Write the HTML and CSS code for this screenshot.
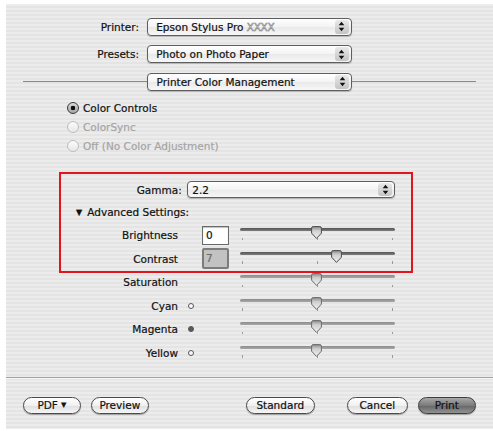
FILE: index.html
```html
<!DOCTYPE html>
<html>
<head>
<meta charset="utf-8">
<title>Print</title>
<link rel="stylesheet" href="styles.css">
</head>
<body>
<div class="panel">
  <div class="field-row">
    <span class="row-label">Printer:</span>
    <div class="popup top-popup">
      <span class="popup-text">Epson Stylus Pro <span class="xxxx">XXXX</span></span>
      <span class="popup-arrows"><svg width="7" height="11" viewBox="0 0 7 11"><path d="M3.5 0.8 L6.3 4.3 H0.7 Z M0.7 6.7 H6.3 L3.5 10.2 Z" fill="#111"/></svg></span>
    </div>
  </div>
  <div class="field-row">
    <span class="row-label">Presets:</span>
    <div class="popup top-popup">
      <span class="popup-text">Photo on Photo Paper</span>
      <span class="popup-arrows"><svg width="7" height="11" viewBox="0 0 7 11"><path d="M3.5 0.8 L6.3 4.3 H0.7 Z M0.7 6.7 H6.3 L3.5 10.2 Z" fill="#111"/></svg></span>
    </div>
  </div>
  <div class="field-row sep-row">
    <span class="sep-line"></span>
    <div class="popup top-popup">
      <span class="popup-text">Printer Color Management</span>
      <span class="popup-arrows"><svg width="7" height="11" viewBox="0 0 7 11"><path d="M3.5 0.8 L6.3 4.3 H0.7 Z M0.7 6.7 H6.3 L3.5 10.2 Z" fill="#111"/></svg></span>
    </div>
    <span class="sep-line"></span>
  </div>

  <div class="radios">
    <div class="radio-row"><span class="radio on"></span><span>Color Controls</span></div>
    <div class="radio-row disabled"><span class="radio"></span><span>ColorSync</span></div>
    <div class="radio-row disabled"><span class="radio"></span><span>Off (No Color Adjustment)</span></div>
  </div>

  <div class="gamma-row">
    <span class="gamma-label">Gamma:</span>
    <div class="popup gamma-popup">
      <span class="popup-text">2.2</span>
      <span class="popup-arrows"><svg width="7" height="11" viewBox="0 0 7 11"><path d="M3.5 0.8 L6.3 4.3 H0.7 Z M0.7 6.7 H6.3 L3.5 10.2 Z" fill="#111"/></svg></span>
    </div>
  </div>
  <div class="advanced-row">
    <span class="disclosure">▼</span><span>Advanced Settings:</span>
  </div>

  <div class="slider-row">
    <span class="slider-label">Brightness</span>
    <span class="indicator"></span>
    <span class="value-box">0</span>
    <div class="slider dark">
      <div class="track"></div>
      <div class="ticks"><i></i><i></i><i></i></div>
      <svg class="thumb" style="left:71.2px" width="11" height="13" viewBox="0 0 11 13"><path d="M2.2 0.6 H8.8 Q10.4 0.6 10.4 2.2 V7.2 L5.5 12.4 L0.6 7.2 V2.2 Q0.6 0.6 2.2 0.6 Z" fill="url(#tg)" stroke="#4a4a4a" stroke-width="1"/><defs><linearGradient id="tg" x1="0" y1="0" x2="0" y2="1"><stop offset="0" stop-color="#8a8a8a"/><stop offset="0.35" stop-color="#cfcfcf"/><stop offset="1" stop-color="#f2f2f2"/></linearGradient></defs></svg>
    </div>
  </div>
  <div class="slider-row">
    <span class="slider-label">Contrast</span>
    <span class="indicator"></span>
    <span class="value-box focused">7</span>
    <div class="slider dark">
      <div class="track"></div>
      <div class="ticks"><i></i><i></i><i></i></div>
      <svg class="thumb" style="left:91.2px" width="11" height="13" viewBox="0 0 11 13"><path d="M2.2 0.6 H8.8 Q10.4 0.6 10.4 2.2 V7.2 L5.5 12.4 L0.6 7.2 V2.2 Q0.6 0.6 2.2 0.6 Z" fill="url(#tg)" stroke="#4a4a4a" stroke-width="1"/></svg>
    </div>
  </div>
  <div class="slider-row">
    <span class="slider-label">Saturation</span>
    <span class="indicator"></span>
    <span class="value-spacer"></span>
    <div class="slider">
      <div class="track"></div>
      <div class="ticks"><i></i><i></i><i></i></div>
      <svg class="thumb" style="left:71.2px" width="11" height="13" viewBox="0 0 11 13"><path d="M2.2 0.6 H8.8 Q10.4 0.6 10.4 2.2 V7.2 L5.5 12.4 L0.6 7.2 V2.2 Q0.6 0.6 2.2 0.6 Z" fill="url(#tg)" stroke="#6a6a6a" stroke-width="1"/></svg>
    </div>
  </div>
  <div class="slider-row">
    <span class="slider-label">Cyan</span>
    <span class="indicator"><span class="dot"></span></span>
    <span class="value-spacer"></span>
    <div class="slider">
      <div class="track"></div>
      <div class="ticks"><i></i><i></i><i></i></div>
      <svg class="thumb" style="left:71.2px" width="11" height="13" viewBox="0 0 11 13"><path d="M2.2 0.6 H8.8 Q10.4 0.6 10.4 2.2 V7.2 L5.5 12.4 L0.6 7.2 V2.2 Q0.6 0.6 2.2 0.6 Z" fill="url(#tg)" stroke="#6a6a6a" stroke-width="1"/></svg>
    </div>
  </div>
  <div class="slider-row">
    <span class="slider-label">Magenta</span>
    <span class="indicator"><span class="dot filled"></span></span>
    <span class="value-spacer"></span>
    <div class="slider">
      <div class="track"></div>
      <div class="ticks"><i></i><i></i><i></i></div>
      <svg class="thumb" style="left:71.2px" width="11" height="13" viewBox="0 0 11 13"><path d="M2.2 0.6 H8.8 Q10.4 0.6 10.4 2.2 V7.2 L5.5 12.4 L0.6 7.2 V2.2 Q0.6 0.6 2.2 0.6 Z" fill="url(#tg)" stroke="#6a6a6a" stroke-width="1"/></svg>
    </div>
  </div>
  <div class="slider-row">
    <span class="slider-label">Yellow</span>
    <span class="indicator"><span class="dot"></span></span>
    <span class="value-spacer"></span>
    <div class="slider">
      <div class="track"></div>
      <div class="ticks"><i></i><i></i><i></i></div>
      <svg class="thumb" style="left:71.2px" width="11" height="13" viewBox="0 0 11 13"><path d="M2.2 0.6 H8.8 Q10.4 0.6 10.4 2.2 V7.2 L5.5 12.4 L0.6 7.2 V2.2 Q0.6 0.6 2.2 0.6 Z" fill="url(#tg)" stroke="#6a6a6a" stroke-width="1"/></svg>
    </div>
  </div>

  <div class="divider"></div>

  <div class="button-row">
    <span class="btn btn-pdf">PDF <span class="btn-tri">▼</span></span>
    <span class="btn btn-preview">Preview</span>
    <span class="btn btn-standard">Standard</span>
    <span class="btn btn-cancel">Cancel</span>
    <span class="btn btn-print">Print</span>
  </div>

  <div class="highlight"></div>
</div>
</body>
</html>
```

FILE: styles.css
```css
* { box-sizing: border-box; }
html, body { margin: 0; padding: 0; background: #fff; }
body {
  width: 493px;
  height: 431px;
  overflow: hidden;
  font-family: "DejaVu Sans", "Liberation Sans", sans-serif;
  font-size: 10.5px;
  color: #111;
  -webkit-text-stroke: 0.2px currentColor;
}
.panel {
  position: relative;
  margin: 4px 0 0 6px;
  width: 487px;
  height: 425px;
  padding-top: 9px;
  background: repeating-linear-gradient(to bottom, #ececec 0, #ececec 2px, #e4e4e4 2px, #e4e4e4 4px);
}

/* top popup rows */
.field-row { display: flex; align-items: center; height: 27.5px; }
.row-label { width: 133px; text-align: right; margin-right: 7.7px; }
.popup {
  display: flex;
  align-items: center;
  height: 18px;
  border: 1px solid #5e5e5e;
  border-radius: 4px;
  background: linear-gradient(#ffffff, #f3f3f3 50%, #e9e9e9 51%, #f7f7f7);
  box-shadow: 0 1px 1px rgba(0, 0, 0, 0.22);
}
.top-popup { width: 205px; padding-left: 8.5px; }
.popup-text { flex: 1; white-space: nowrap; }
.xxxx { color: #f4f4f4; -webkit-text-stroke: 0.6px #8a8a8a; letter-spacing: -0.3px; }
.popup-arrows {
  width: 14px;
  height: 14px;
  margin-right: 2px;
  border-radius: 3px;
  background: linear-gradient(#e9e9e9, #c4c4c4);
  display: flex;
  align-items: center;
  justify-content: center;
}
.sep-row { padding: 0 16.7px; }
.sep-line { flex: 1; height: 1px; background: #888; }

/* radios */
.radios { margin-top: 3.3px; padding-left: 61px; }
.radio-row { display: flex; align-items: center; gap: 4px; height: 18.7px; }
.radio-row.disabled { color: #a4a4a4; }
.radio {
  width: 12px;
  height: 12px;
  border-radius: 50%;
  border: 1px solid #bdbdbd;
  background: linear-gradient(#fbfbfb, #e8e8e8);
}
.radio.on {
  border-color: #3a3a3a;
  background: radial-gradient(circle, #111 0, #111 2px, rgba(0,0,0,0) 2.6px), linear-gradient(#dcdcdc, #a6a6a6);
}

/* gamma */
.gamma-row { display: flex; align-items: center; height: 22px; margin-top: 24px; }
.gamma-label { width: 175.7px; text-align: right; margin-right: 5.6px; }
.gamma-popup { width: 208px; height: 17px; padding-left: 4px; }
.gamma-popup .popup-arrows { height: 13px; }

.advanced-row { display: flex; align-items: center; height: 22.5px; padding-left: 70px; }
.disclosure { font-size: 8px; width: 11.3px; }

/* sliders */
.slider-row { display: flex; align-items: center; height: 23.5px; }
.slider-label { width: 172px; text-align: right; }
.indicator { width: 24px; display: flex; align-items: center; }
.dot {
  width: 6px;
  height: 6px;
  margin-left: 10px;
  border-radius: 50%;
  border: 1px solid #555;
  background: #fafafa;
}
.dot.filled { background: #5a5a5a; }
.value-box {
  width: 27px;
  height: 19px;
  border: 1px solid #6a6a6a;
  background: #fff;
  padding-left: 3px;
  line-height: 17px;
  box-shadow: inset 0 1px 1px rgba(0, 0, 0, 0.25);
}
.value-box.focused {
  height: 21px;
  border: 2px solid #7c7c7c;
  border-radius: 2px;
  background: #c2c2c2;
  color: #6a6a6a;
  padding-left: 2px;
  box-shadow: none;
}
.value-spacer { width: 27px; }
.slider { position: relative; width: 155px; align-self: stretch; margin-left: 11px; }
.track {
  margin-top: 4.75px;
  height: 3px;
  border-radius: 2px;
  background: linear-gradient(#8c8c8c, #a8a8a8);
}
.slider.dark .track { background: linear-gradient(#555, #7c7c7c); }
.ticks {
  display: flex;
  justify-content: space-between;
  padding: 0 2.2px;
  margin-top: 6.5px;
}
.ticks i { display: block; width: 1px; height: 2.5px; background: #9a9a9a; }
.thumb { position: absolute; top: 3px; }

/* bottom */
.divider { margin-top: 12.2px; height: 1px; background: #a2a2a2; box-shadow: 0 1px 0 #f7f7f7; }
.button-row { display: flex; margin-top: 19px; padding-left: 16.7px; }
.btn {
  display: flex;
  align-items: center;
  justify-content: center;
  height: 17px;
  border: 1px solid #4a4a4a;
  border-radius: 9px;
  background: linear-gradient(#ffffff, #f0f0f0 50%, #dedede 51%, #f6f6f6);
  box-shadow: 0 1px 1px rgba(0, 0, 0, 0.3);
  white-space: nowrap;
}
.btn-tri { font-size: 7px; margin-left: 3px; }
.btn-pdf { width: 58.3px; }
.btn-preview { width: 58.3px; margin-left: 9.7px; }
.btn-standard { width: 69.3px; margin-left: 96.7px; }
.btn-cancel { width: 61.3px; margin-left: 31.7px; }
.btn-print {
  width: 58.3px;
  margin-left: 9.7px;
  border-color: #3c3c3c;
  background: linear-gradient(#a8a8a8, #7a7a7a 50%, #656565 51%, #929292);
}

/* annotation overlay */
.highlight {
  position: absolute;
  left: 53px;
  top: 167.7px;
  width: 354px;
  height: 101.3px;
  border: 2px solid #e2141c;
}
```
